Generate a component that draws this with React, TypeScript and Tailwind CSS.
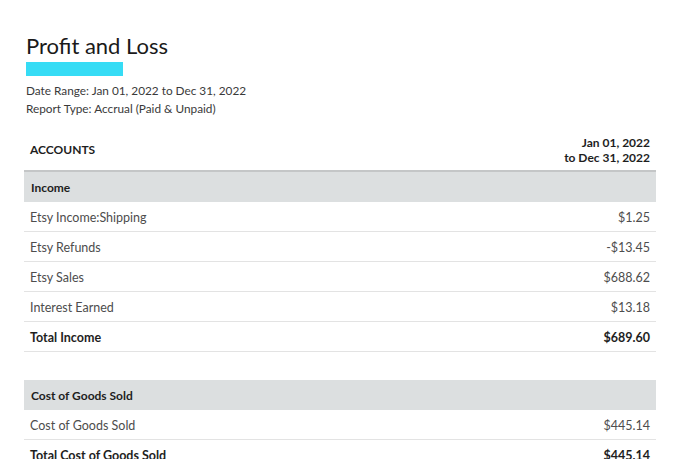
const incomeRows = [
  { name: "Etsy Income:Shipping", amount: "$1.25" },
  { name: "Etsy Refunds", amount: "-$13.45" },
  { name: "Etsy Sales", amount: "$688.62" },
  { name: "Interest Earned", amount: "$13.18" },
];

function SectionHeader({ title }: { title: string }) {
  return (
    <div className="flex h-[30px] items-center bg-[#dcdfe0] px-[7px] pt-[2px] text-[12px] font-bold text-[#1e1e1e]">
      {title}
    </div>
  );
}

function Row({ name, amount, bold }: { name: string; amount: string; bold?: boolean }) {
  return (
    <div
      className={`flex h-[30px] items-center justify-between border-b border-[#e3e3e3] px-[6px] pt-[3px] text-[12.5px] ${
        bold ? "font-bold text-[#1e1e1e]" : "text-[#4d4d4d]"
      }`}
    >
      <span>{name}</span>
      <span>{amount}</span>
    </div>
  );
}

export default function App() {
  return (
    <div
      className="min-h-screen bg-white px-[24px] pt-[32px]"
      style={{ fontFamily: "Lato, 'Noto Sans', sans-serif" }}
    >
      <h1 className="ml-[2px] text-[22px] leading-[27px] text-[#1a1a1a]">Profit and Loss</h1>
      <div className="ml-[2px] mt-[3px] h-[14px] w-[97px] bg-[#36dcf5]" />
      <div className="ml-[2px] mt-[6px] text-[11.8px] leading-[18px] text-[#3a3a3a]">
        <p>Date Range: Jan 01, 2022 to Dec 31, 2022</p>
        <p>Report Type: Accrual (Paid &amp; Unpaid)</p>
      </div>

      <div className="mt-[12px]">
        <div className="flex h-[42px] items-center justify-between border-b-2 border-[#c4c6c7] px-[6px] text-[12px] font-bold text-[#1e1e1e]">
          <span>ACCOUNTS</span>
          <span className="text-right leading-[15px]">
            Jan 01, 2022
            <br />
            to Dec 31, 2022
          </span>
        </div>
        <SectionHeader title="Income" />
        {incomeRows.map((r) => (
          <Row key={r.name} name={r.name} amount={r.amount} />
        ))}
        <Row name="Total Income" amount="$689.60" bold />

        <div className="mt-[28px]">
          <SectionHeader title="Cost of Goods Sold" />
          <Row name="Cost of Goods Sold" amount="$445.14" />
          <Row name="Total Cost of Goods Sold" amount="$445.14" bold />
        </div>
      </div>
    </div>
  );
}
